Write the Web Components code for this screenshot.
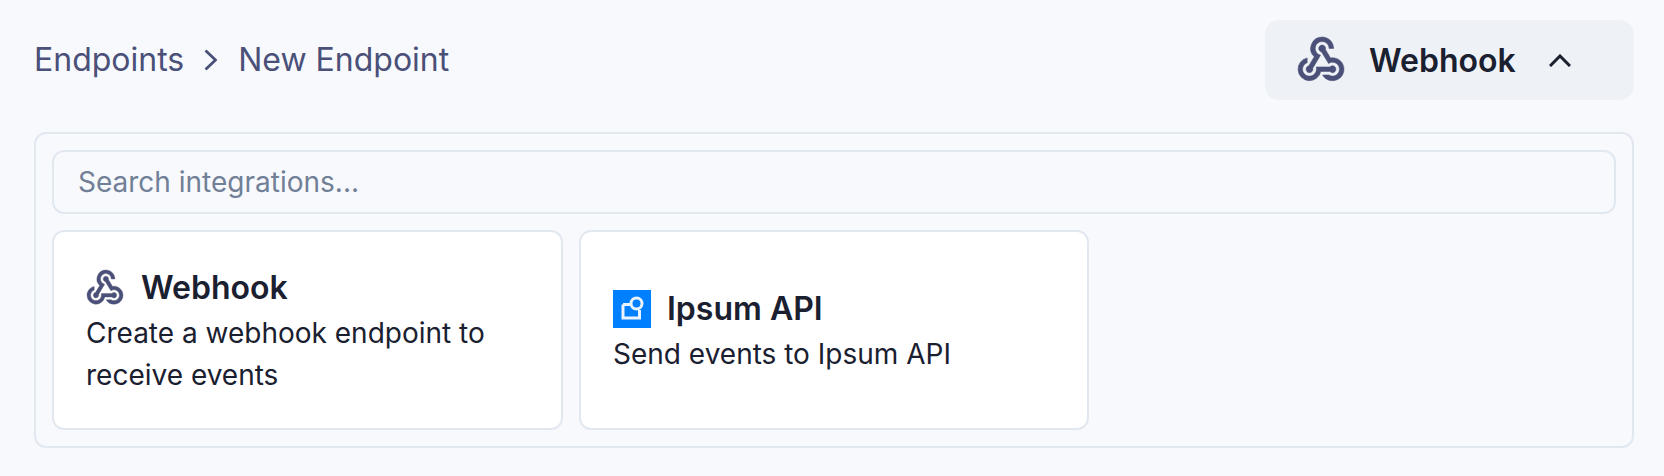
<!DOCTYPE html>
<html><head><meta charset="utf-8"><style>
html,body{margin:0;background:#f8f9fd;}
body{font-family:Inter,sans-serif;width:1664px;height:476px;overflow:hidden}
</style></head><body>
<template id="hook"><style>:host{display:inline-flex;flex:none}svg{display:block;width:100%;height:100%;fill:#4a5078;stroke:#4a5078;stroke-width:.22;overflow:visible}</style>
<svg viewBox="2 2 20 20"><path d="M10 15h5.88c.27-.31.67-.5 1.12-.5.83 0 1.5.67 1.5 1.5s-.67 1.5-1.5 1.5c-.44 0-.84-.19-1.12-.5H11.9A5 5 0 1 1 6 11.1v2.07c-1.16.41-2 1.53-2 2.83 0 1.65 1.35 3 3 3s3-1.35 3-3v-1zm2.5-11c1.65 0 3 1.35 3 3h2c0-2.76-2.24-5-5-5a5.002 5.002 0 0 0-3.45 8.62l-2.35 3.9c-.68.14-1.2.75-1.2 1.48 0 .83.67 1.5 1.5 1.5a1.498 1.498 0 0 0 1.43-1.95l3.38-5.63C10.49 9.61 9.5 8.42 9.5 7c0-1.65 1.35-3 3-3zm4.5 9c-.64 0-1.23.2-1.72.54l-3.05-5.07C11.53 8.35 11 7.74 11 7c0-.83.67-1.5 1.5-1.5S14 6.17 14 7c0 .15-.02.29-.06.43l2.19 3.65c.28-.05.57-.08.87-.08 2.76 0 5 2.24 5 5s-2.24 5-5 5a5 5 0 0 1-4.33-2.5h2.67c.48.32 1.05.5 1.66.5 1.65 0 3-1.35 3-3s-1.35-3-3-3z"/></svg></template>
<template id="ipsum"><style>:host{display:inline-flex;flex:none;width:38px;height:38px}svg{display:block;width:100%;height:100%}</style>
<svg viewBox="0 0 38 38"><rect width="38" height="38" fill="#007fff"/><path d="M10 14.5H19M26.5 20V28H10V14.5" fill="none" stroke="#eaf3ff" stroke-width="3"/><circle cx="23.5" cy="13.5" r="5.5" fill="#007fff" stroke="#eaf3ff" stroke-width="3"/></svg></template>
<template id="crumbs"><style>:host{display:flex;align-items:center;color:#4a5078;font-size:32px;line-height:48px}svg{display:block;width:13px;height:22px;margin:0 21px 0 20px;fill:none;stroke:#4a5078;stroke-width:2.8}</style>
<span>Endpoints</span><svg viewBox="0 0 13 22"><path d="M1.5 1.5 11.5 11 1.5 20.5" /></svg><span>New Endpoint</span></template>
<template id="selector"><style>:host{display:flex;align-items:center;width:369px;height:80px;box-sizing:border-box;padding-left:33px;background:#eef2f6;border-radius:14px;color:#1a2030;font-size:32px;font-weight:600}
x-hook{width:46px;height:46px}span{margin-left:25px}svg{display:block;width:22px;height:13px;margin-left:33px;fill:none;stroke:#1a2030;stroke-width:3}</style>
<x-hook></x-hook><span>Webhook</span><svg viewBox="0 0 22 13"><path d="M1 12 11 2 21 12"/></svg></template>
<template id="search"><style>:host{display:flex;align-items:center;height:64px;box-sizing:border-box;border:2px solid #e2e8f0;border-radius:12px;padding-left:24px;color:#718096;font-size:28px}</style><slot></slot></template>
<template id="card"><style>:host{display:flex;flex-direction:column;justify-content:center;box-sizing:border-box;height:200px;background:#fff;border:2px solid #e2e8f0;border-radius:12px;padding:0 32px;color:#1a2030}
.t{display:flex;align-items:center;gap:16px;font-size:32px;font-weight:600;line-height:48px}.d{font-size:28px;line-height:42px}</style>
<div class="t"><slot name="icon"></slot><span><slot name="title"></slot></span></div><div class="d"><slot></slot></div></template>
<template id="app"><style>:host{display:block;padding:20px 30px 0 34px}
.top{display:flex;justify-content:space-between;align-items:center;height:80px}
.panel{margin-top:32px;height:316px;box-sizing:border-box;border:2px solid #e2e8f0;border-radius:12px;padding:16px;display:flex;flex-direction:column;gap:16px}
.grid{display:grid;grid-template-columns:511px 510px;gap:16px}
x-hook{width:36px;height:36px;margin:0 2px 0 1px}</style>
<div class="top"><x-crumbs></x-crumbs><x-selector></x-selector></div>
<div class="panel"><x-search>Search integrations...</x-search>
<div class="grid"><x-card><x-hook slot="icon"></x-hook><span slot="title">Webhook</span>Create a webhook endpoint to receive events</x-card>
<x-card><x-ipsum slot="icon"></x-ipsum><span slot="title">Ipsum API</span>Send events to Ipsum API</x-card></div></div></template>
<x-app></x-app>
<script>
for(const n of ['hook','ipsum','crumbs','selector','search','card','app']){
customElements.define('x-'+n,class extends HTMLElement{constructor(){super();this.attachShadow({mode:'open'}).appendChild(document.getElementById(n).content.cloneNode(true))}});
}
</script></body></html>
